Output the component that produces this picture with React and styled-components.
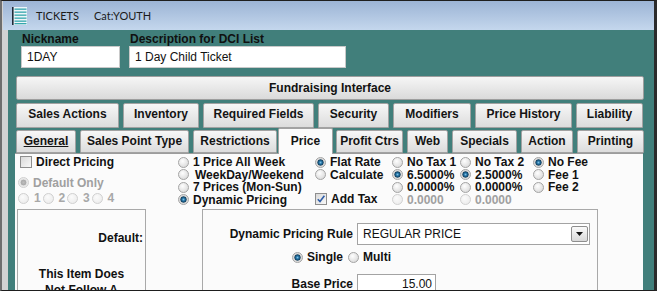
import React from 'react';
import styled, { createGlobalStyle } from 'styled-components';

const GlobalStyle = createGlobalStyle`
  body {
    margin: 0;
    background: #fff;
    font-family: "Liberation Sans", Arial, sans-serif;
  }
`;

const salesTabs = [
  { label: 'Sales Actions', w: 103 },
  { label: 'Inventory', w: 76 },
  { label: 'Required Fields', w: 111 },
  { label: 'Security', w: 71 },
  { label: 'Modifiers', w: 78 },
  { label: 'Price History', w: 97 },
  { label: 'Liability', w: 67 },
];

const mainTabs = [
  { label: 'General', w: 60, u: true },
  { label: 'Sales Point Type', w: 109 },
  { label: 'Restrictions', w: 84 },
  { label: 'Price', w: 55, active: true },
  { label: 'Profit Ctrs', w: 67 },
  { label: 'Web', w: 41 },
  { label: 'Specials', w: 65 },
  { label: 'Action', w: 52 },
  { label: 'Printing', w: 67 },
];

const TicketIcon = () => (
  <svg width="15" height="18" viewBox="0 0 15 18">
    <rect x="0" y="0" width="15" height="18" fill="#eef5f8" />
    <rect x="0" y="0" width="1.6" height="18" fill="#1f2a38" />
    {[1.5, 4.5, 7.5, 10.5, 13.5, 16].map(y => (
      <rect key={y} x="2.5" y={y} width="12" height="1.3" fill="#35a7ad" />
    ))}
  </svg>
);

const CheckMark = () => (
  <svg width="10" height="10" viewBox="0 0 10 10">
    <path d="M1.8 5.2 L4 7.6 L8.4 1.8" fill="none" stroke="#2f5ea8" strokeWidth="1.6" />
  </svg>
);

const Option = ({ label, checked, disabled, pad }) => (
  <OptionRow $disabled={disabled}>
    <Radio $checked={checked} $disabled={disabled} />
    <OptionText $pad={pad}>{label}</OptionText>
  </OptionRow>
);

const App = () => {
  return (
    <>
      <GlobalStyle />
      <Window>
        <TitleBar>
          <TicketIcon />
          <TitleText>TICKETS</TitleText>
          <TitleText>Cat:YOUTH</TitleText>
        </TitleBar>
        <Body>
          <Header>
            <Field>
              <FieldLabel>Nickname</FieldLabel>
              <TextBox $w={99}>1DAY</TextBox>
            </Field>
            <Field>
              <FieldLabel>Description for DCI List</FieldLabel>
              <TextBox $w={217}>1 Day Child Ticket</TextBox>
            </Field>
          </Header>

          <WideButton>Fundraising Interface</WideButton>

          <TabRow>
            {salesTabs.map(t => (
              <Tab key={t.label} $w={t.w}>{t.label}</Tab>
            ))}
          </TabRow>
          <TabRow $second>
            {mainTabs.map(t => (
              <Tab key={t.label} $w={t.w} $active={t.active} $u={t.u}>
                {t.label}
              </Tab>
            ))}
          </TabRow>

          <Panel>
            <Controls>
              <Column $w={158}>
                <OptionRow>
                  <Box />
                  <OptionText>Direct Pricing</OptionText>
                </OptionRow>
                <DefaultOnly>
                  <Option label="Default Only" checked disabled />
                </DefaultOnly>
                <NumberRow>
                  {['1', '2', '3', '4'].map(n => (
                    <NumberItem key={n}>
                      <Radio $disabled />
                      <OptionText>{n}</OptionText>
                    </NumberItem>
                  ))}
                </NumberRow>
              </Column>
              <Column $w={137}>
                <Option label="1 Price All Week" />
                <Option label="WeekDay/Weekend" pad />
                <Option label="7 Prices (Mon-Sun)" />
                <Option label="Dynamic Pricing" checked />
              </Column>
              <Column $w={77}>
                <Option label="Flat Rate" checked />
                <Option label="Calculate" />
                <Spacer />
                <OptionRow>
                  <Box>
                    <CheckMark />
                  </Box>
                  <OptionText>Add Tax</OptionText>
                </OptionRow>
              </Column>
              <Column $w={68}>
                <Option label="No Tax 1" />
                <Option label="6.5000%" checked />
                <Option label="0.0000%" />
                <Option label="0.0000" disabled />
              </Column>
              <Column $w={73}>
                <Option label="No Tax 2" />
                <Option label="2.5000%" checked />
                <Option label="0.0000%" />
                <Option label="0.0000" disabled />
              </Column>
              <Column>
                <Option label="No Fee" checked />
                <Option label="Fee 1" />
                <Option label="Fee 2" />
              </Column>
            </Controls>

            <Lower>
              <DefaultBox>
                <DefaultLabel>Default:</DefaultLabel>
                <Notice>
                  This Item Does
                  <br />
                  Not Follow A
                </Notice>
              </DefaultBox>
              <RuleBox>
                <RuleLabel>Dynamic Pricing Rule</RuleLabel>
                <Select>
                  <SelectText>REGULAR PRICE</SelectText>
                  <ArrowButton>
                    <svg width="7" height="4" viewBox="0 0 7 4">
                      <path d="M0 0 H7 L3.5 4 Z" fill="#111" />
                    </svg>
                  </ArrowButton>
                </Select>
                <ModeRow>
                  <Option label="Single" checked />
                  <Option label="Multi" />
                </ModeRow>
                <RuleLabel $top={10}>Base Price</RuleLabel>
                <PriceBox>15.00</PriceBox>
              </RuleBox>
            </Lower>
          </Panel>
        </Body>
      </Window>
    </>
  );
};

export default App;

const Window = styled.div`
  width: 657px;
  height: 291px;
  box-sizing: border-box;
  border-top: 1px solid #1e1e1e;
  border-bottom: 1px solid #1e1e1e;
  border-left: 2px solid #6e6e6e;
  border-right: 3px solid #2b2b2b;
  background: #d2d2d2;
  display: flex;
  flex-direction: column;
  overflow: hidden;
`;

const TitleBar = styled.div`
  height: 29px;
  flex: none;
  margin-left: 1px;
  padding-left: 9px;
  display: flex;
  align-items: center;
  gap: 8px;
  background: linear-gradient(#9cb4d5, #c4d7ed);
`;

const TitleText = styled.span`
  font-family: Lato, "Liberation Sans", sans-serif;
  font-size: 11px;
  color: #1b1b1b;
  margin-left: 1px;
  & + & {
    margin-left: 7px;
  }
`;

const Body = styled.div`
  flex: 1;
  min-height: 0;
  margin-left: 6px;
  padding: 2px 10px 0 8px;
  background: #417f7b;
  display: flex;
  flex-direction: column;
`;

const Header = styled.div`
  display: flex;
  gap: 9px;
  margin-left: 5px;
`;

const Field = styled.div`
  display: flex;
  flex-direction: column;
`;

const FieldLabel = styled.div`
  font-size: 12px;
  font-weight: bold;
  line-height: 14px;
  color: #101010;
  padding-left: 1px;
`;

const TextBox = styled.div`
  width: ${p => p.$w}px;
  height: 22px;
  box-sizing: border-box;
  background: #fff;
  border: 1px solid #c9c9c9;
  padding-left: 5px;
  font-size: 12px;
  line-height: 20px;
  color: #111;
`;

const WideButton = styled.div`
  margin-top: 8px;
  height: 24px;
  box-sizing: border-box;
  border: 1px solid #9e9e9e;
  border-radius: 2px;
  background: linear-gradient(#f6f6f6, #dadada);
  font-size: 12px;
  font-weight: bold;
  line-height: 22px;
  text-align: center;
  color: #111;
`;

const TabRow = styled.div`
  display: flex;
  align-items: flex-start;
  gap: 4px;
  margin-top: ${p => (p.$second ? 2 : 3)}px;
  height: ${p => (p.$second ? 23 : 25)}px;
  flex: none;
`;

const Tab = styled.div`
  width: ${p => p.$w}px;
  flex: none;
  box-sizing: border-box;
  height: ${p => (p.$active ? '26px' : '100%')};
  margin: ${p => (p.$active ? '-2px -1px 0 -3px' : '0')};
  position: relative;
  z-index: ${p => (p.$active ? 2 : 0)};
  border: 1px solid #a2a2a2;
  border-bottom: ${p => (p.$active ? 'none' : '1px solid #a2a2a2')};
  border-radius: 2px 2px 0 0;
  background: ${p => (p.$active ? '#fbfbfb' : 'linear-gradient(#f7f7f7, #dcdcdc)')};
  font-size: 12px;
  font-weight: bold;
  color: #141414;
  text-align: center;
  line-height: ${p => (p.$active ? '24px' : '21px')};
  text-decoration: ${p => (p.$u ? 'underline' : 'none')};
`;

const Panel = styled.div`
  flex: 1;
  margin: 0 1px 0 -1px;
  background: #fbfbfb;
  border-top: 1px solid #9c9c9c;
  display: flex;
  flex-direction: column;
  min-height: 0;
`;

const Controls = styled.div`
  display: flex;
  padding: 2px 0 0 5px;
  height: 50px;
`;

const Column = styled.div`
  width: ${p => (p.$w ? `${p.$w}px` : 'auto')};
  flex: none;
  display: flex;
  flex-direction: column;
`;

const OptionRow = styled.div`
  display: flex;
  align-items: center;
  gap: 4px;
  height: 12.5px;
  font-size: 12px;
  font-weight: bold;
  color: ${p => (p.$disabled ? '#a0a0a0' : '#111')};
  white-space: nowrap;
`;

const OptionText = styled.span`
  line-height: 12px;
  padding-left: ${p => (p.$pad ? 2 : 0)}px;
`;

const Radio = styled.span`
  width: 11px;
  height: 11px;
  flex: none;
  box-sizing: border-box;
  border-radius: 50%;
  border: 1px solid ${p => (p.$disabled ? '#d0d0d0' : '#a4a4a4')};
  background: ${p =>
    p.$checked && !p.$disabled
      ? 'radial-gradient(circle at 50% 50%, #7cc0e4 0, #1f6d9f 1.6px, #12405f 2.8px, #cfcfcf 3.4px, #ececec 5px)'
      : p.$checked
      ? 'radial-gradient(circle at 50% 50%, #bdbdbd 0, #a9a9a9 2.6px, #e2e2e2 3.2px, #f2f2f2 5px)'
      : p.$disabled
      ? 'radial-gradient(circle at 40% 35%, #fbfbfb, #e8e8e8)'
      : 'radial-gradient(circle at 40% 35%, #fefefe, #d2d2d2)'};
`;

const Box = styled.span`
  width: 12px;
  height: 12px;
  flex: none;
  box-sizing: border-box;
  border: 1px solid #8e8e8e;
  background: linear-gradient(135deg, #d9d9d9, #f8f8f8);
  display: flex;
  align-items: center;
  justify-content: center;
`;

const DefaultOnly = styled.div`
  margin: 8px 0 0 -2px;
`;

const NumberRow = styled.div`
  display: flex;
  margin: 3px 0 0 -2px;
  color: #a8a8a8;
  font-size: 12px;
  font-weight: bold;
  height: 12.5px;
`;

const NumberItem = styled.div`
  display: flex;
  align-items: center;
  gap: 5px;
  width: 24.5px;
`;

const Spacer = styled.div`
  height: 11.5px;
`;

const Lower = styled.div`
  display: flex;
  gap: 56px;
  margin-top: 3px;
  padding-left: 2px;
  flex: 1;
  min-height: 0;
`;

const DefaultBox = styled.div`
  width: 129px;
  height: 100px;
  box-sizing: border-box;
  border: 1px solid #a9a9a9;
  border-bottom: none;
  display: flex;
  flex-direction: column;
  font-size: 12px;
  font-weight: bold;
  color: #111;
`;

const DefaultLabel = styled.div`
  margin-top: 21px;
  padding-right: 2px;
  line-height: 14px;
  text-align: right;
`;

const Notice = styled.div`
  margin-top: 21px;
  line-height: 16px;
  text-align: center;
`;

const RuleBox = styled.div`
  width: 396px;
  height: 100px;
  box-sizing: border-box;
  border: 1px solid #a9a9a9;
  border-bottom: none;
  padding-top: 13px;
  display: grid;
  grid-template-columns: 150px auto;
  column-gap: 4px;
  align-content: start;
  align-items: center;
`;

const RuleLabel = styled.div`
  margin-top: ${p => p.$top || 0}px;
  font-size: 12px;
  font-weight: bold;
  color: #111;
  text-align: right;
`;

const Select = styled.div`
  width: 233px;
  height: 22px;
  box-sizing: border-box;
  border: 1px solid #a3a3a3;
  background: #fff;
  display: flex;
  align-items: center;
`;

const SelectText = styled.span`
  flex: 1;
  padding-left: 5px;
  font-size: 12px;
  color: #111;
`;

const ArrowButton = styled.span`
  width: 17px;
  height: 16px;
  margin-right: 1px;
  box-sizing: border-box;
  border: 1px solid #8e8e8e;
  border-radius: 2px;
  background: linear-gradient(#fafafa, #d8d8d8);
  display: flex;
  align-items: center;
  justify-content: center;
`;

const ModeRow = styled.div`
  grid-column: 1 / -1;
  display: flex;
  gap: 5px;
  margin-top: 6px;
  padding-left: 89px;
`;

const PriceBox = styled.div`
  width: 79px;
  height: 20px;
  margin-top: 10px;
  box-sizing: border-box;
  border: 1px solid #a3a3a3;
  background: #fff;
  padding-right: 3px;
  font-size: 12px;
  line-height: 18px;
  text-align: right;
  color: #111;
`;
